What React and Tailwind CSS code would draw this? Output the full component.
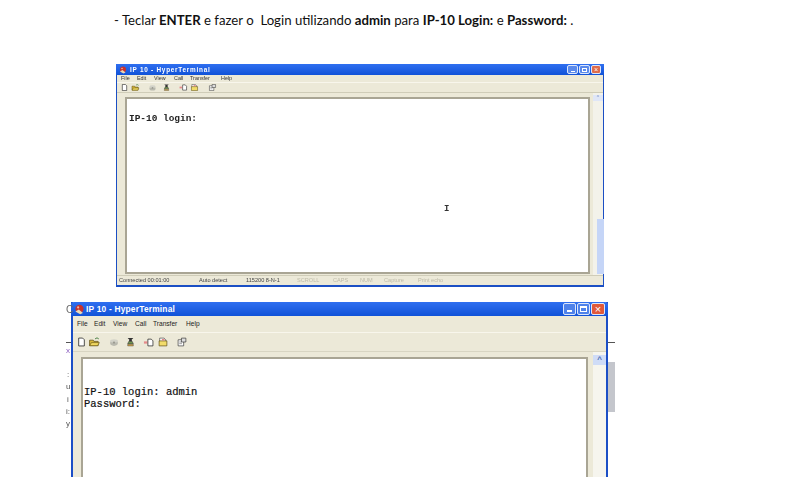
const DocIcon = ({ className }) => (
  <svg viewBox="0 0 16 16" className={className}>
    <path d="M3 1h7l3 3v11H3z" fill="#fff" stroke="#222" strokeWidth="1.4" />
  </svg>
);
const OpenIcon = ({ className }) => (
  <svg viewBox="0 0 18 16" className={className}>
    <path d="M1 5h6l1 2h7v7H1z" fill="#d9b93a" stroke="#5a4a10" strokeWidth="1.2" />
    <path d="M1 14l3-5h13l-3 5z" fill="#f0d860" stroke="#5a4a10" strokeWidth="1" />
    <path d="M10 3c2-2 4-2 6 0" fill="none" stroke="#2a6a2a" strokeWidth="1.4" />
  </svg>
);
const GreyPhone = ({ className }) => (
  <svg viewBox="0 0 18 16" className={className}>
    <ellipse cx="9" cy="10" rx="7" ry="5" fill="#b9b9ae" />
    <ellipse cx="9" cy="6" rx="7" ry="3" fill="#d2d2c8" />
    <circle cx="9" cy="9" r="2" fill="#9a9a90" />
  </svg>
);
const PhoneIcon = ({ className }) => (
  <svg viewBox="0 0 16 16" className={className}>
    <path d="M3 1h10l-3 3 1 3H5l1-3z" fill="#333" />
    <path d="M5 7h6l2 4H3z" fill="#6f9a4a" stroke="#333" />
    <path d="M3 12h10v3H3z" fill="#d0a040" stroke="#333" strokeWidth="0.7" />
  </svg>
);
const SendIcon = ({ className }) => (
  <svg viewBox="0 0 20 16" className={className}>
    <rect x="1" y="6" width="6" height="4" fill="#e58a8a" />
    <path d="M8 2h6l3 3v9H8z" fill="#fff" stroke="#222" strokeWidth="1.3" />
  </svg>
);
const RecvIcon = ({ className }) => (
  <svg viewBox="0 0 18 16" className={className}>
    <path d="M3 1h8l3 3v4H3z" fill="#fff" stroke="#222" />
    <path d="M2 6h14v9H2z" fill="#f2dc6a" stroke="#5a4a10" strokeWidth="1.2" />
    <path d="M7 3h5v2H7z" fill="#d66" />
  </svg>
);
const PropsIcon = ({ className }) => (
  <svg viewBox="0 0 18 16" className={className}>
    <path d="M2 4h10v11H2z" fill="#fff" stroke="#333" strokeWidth="1.2" />
    <path d="M8 1h8v7H8z" fill="#ddd" stroke="#333" strokeWidth="1.2" />
    <path d="M4 8h5M4 11h5" stroke="#555" />
  </svg>
);
const HyperLogo = ({ className }) => (
  <svg viewBox="0 0 16 16" className={className}>
    <circle cx="8" cy="7" r="6" fill="#c8322c" />
    <path d="M2 11l5-3 6 5-4 2z" fill="#e9d9b5" />
    <circle cx="6" cy="5" r="1.6" fill="#f1b4a0" />
  </svg>
);

const WinButton = ({ className, children }) => (
  <div className={`flex items-center justify-center rounded-[2px] border border-[#dbe6fb] ${className}`}>{children}</div>
);

export default function App() {
  return (
    <div className="w-[786px] h-[494px] overflow-hidden bg-white flex flex-col font-['Liberation_Sans',sans-serif]">
      <p className="ml-[114px] mt-[12px] h-[17px] leading-[17px] text-[13.2px] text-[#111] whitespace-pre font-['Lato',sans-serif]">
        - Teclar <b>ENTER</b> e fazer o  Login utilizando <b>admin</b> para <b>IP-10 Login:</b> e <b>Password:</b> .
      </p>

      {/* first window */}
      <div className="relative ml-[116px] mt-[35px] w-[488px] h-[223px] flex flex-col bg-[#ece9d8] border-x border-b-2 border-[#1b4fc4] blur-[0.5px]">
        <div className="h-[11px] shrink-0 flex items-center bg-gradient-to-b from-[#2f6ff0] to-[#0f52d8] -mx-px px-[3px]">
          <HyperLogo className="w-[8px] h-[8px] mr-[3px]" />
          <span className="text-[6.4px] font-bold tracking-[0.75px] text-white">IP 10 - HyperTerminal</span>
          <div className="ml-auto flex gap-[1px]">
            <WinButton className="w-[11px] h-[9px] bg-[#5b8aeb] items-end"><div className="w-[4px] h-px bg-white mb-[1px]" /></WinButton>
            <WinButton className="w-[11px] h-[9px] bg-[#5b8aeb]"><div className="w-[5px] h-[4px] border border-white" /></WinButton>
            <WinButton className="w-[10px] h-[9px] bg-[#dd6a4a] text-white text-[7px] leading-none">×</WinButton>
          </div>
        </div>
        <div className="h-[7px] shrink-0 relative flex items-center pl-[4px] text-[5.4px] text-[#333] bg-[#ece9d8]">
          <span className="w-[16px]">File</span>
          <span className="w-[17px]">Edit</span>
          <span className="w-[20px]">View</span>
          <span className="w-[16px]">Call</span>
          <span className="w-[31px]">Transfer</span>
          <span>Help</span>
        </div>
        <div className="h-[11px] shrink-0 flex items-center pl-[4px] border-t border-[#f8f6ec] border-b border-b-[#cfccb8]">
          <DocIcon className="w-[7px] h-[7px]" />
          <OpenIcon className="w-[9px] h-[7px] ml-[3px]" />
          <GreyPhone className="w-[9px] h-[7px] ml-[8px]" />
          <PhoneIcon className="w-[7px] h-[7px] ml-[6px]" />
          <SendIcon className="w-[9px] h-[7px] ml-[9px]" />
          <RecvIcon className="w-[9px] h-[7px] ml-[2px]" />
          <PropsIcon className="w-[9px] h-[7px] ml-[9px]" />
        </div>
        <div className="flex-1 min-h-0 flex">
          <div className="flex-1 ml-[8px] mt-[4px] mb-[1px] bg-white border-2 border-[#a9a594] pl-[1px]">
            <p className="mt-[14px] ml-px text-[9.45px] leading-[12px] font-bold font-['Liberation_Mono',monospace] text-[#222]">IP-10 login:</p>
          </div>
          <div className="w-[10px] ml-[3px] flex flex-col bg-[#f3f2ea]">
            <div className="h-[6px] mt-[2px] bg-[#dfe6f7] text-[#6f87c0] flex justify-center leading-none text-[5px]">^</div>
            <div className="flex-1" />
            <div className="h-[55px] bg-[#c5d5f7] ml-[4px] -mr-px mb-[1px]" />
          </div>
        </div>
        <div className="h-[10px] shrink-0 flex items-center pl-[2px] text-[5.6px] text-[#444] bg-[#ece9d8] border-t border-[#cfccb8]">
          <span className="w-[80px]">Connected 00:01:00</span>
          <span className="w-[47px]">Auto detect</span>
          <span className="w-[51px]">115200 8-N-1</span>
          <span className="w-[36px] text-[#bdbaa8]">SCROLL</span>
          <span className="w-[27px] text-[#bdbaa8]">CAPS</span>
          <span className="w-[24px] text-[#bdbaa8]">NUM</span>
          <span className="w-[34px] text-[#bdbaa8]">Capture</span>
          <span className="text-[#bdbaa8]">Print echo</span>
        </div>
        <span className="absolute left-[327px] top-[141px] font-['Liberation_Mono',monospace] text-[9px] font-bold leading-none text-[#333]">I</span>
      </div>

      {/* second window over the document behind it */}
      <div className="relative ml-[71px] mt-[15px] w-[537px] h-[175px] flex flex-col bg-[#ece9d8] border-x-2 border-[#1c4fc6] blur-[0.4px]">
        <span className="absolute -left-[7px] top-[3px] text-[10px] leading-none text-[#666]">C</span>
        <div className="absolute -left-[7px] top-[40px] w-[5px] h-px bg-[#555]" />
        <span className="absolute -left-[7px] top-[45px] text-[8px] leading-none text-[#8a5cc0]">x</span>
        <span className="absolute -left-[6px] top-[69px] text-[8px] leading-none text-[#555]">:</span>
        <span className="absolute -left-[7px] top-[81px] text-[8px] leading-none text-[#555]">u</span>
        <span className="absolute -left-[6px] top-[94px] text-[8px] leading-none text-[#555]">i</span>
        <span className="absolute -left-[7px] top-[106px] text-[8px] leading-none text-[#555]">i:</span>
        <span className="absolute -left-[7px] top-[118px] text-[8px] leading-none text-[#555]">y</span>
        <div className="absolute -right-[9px] top-[40px] w-[7px] h-px bg-[#555]" />
        <div className="absolute -right-[9px] top-[60px] w-[7px] h-[50px] bg-[#c4c6cc]" />

        <div className="h-[14px] shrink-0 flex items-center bg-gradient-to-b from-[#2f6ff0] to-[#0f52d8] -mx-[2px] px-[3px] rounded-t-[3px]">
          <HyperLogo className="w-[11px] h-[11px] mr-[1px]" />
          <span className="text-[8.4px] font-bold tracking-[0.2px] text-white">IP 10 - HyperTerminal</span>
          <div className="ml-auto flex gap-[1px]">
            <WinButton className="w-[13px] h-[12px] bg-[#4f82ea] items-end"><div className="w-[5px] h-[2px] bg-white mb-[2px]" /></WinButton>
            <WinButton className="w-[13px] h-[12px] bg-[#4f82ea]"><div className="w-[7px] h-[6px] border border-white border-t-2" /></WinButton>
            <WinButton className="w-[14px] h-[12px] bg-[#e0593a] text-white text-[11px] leading-none">×</WinButton>
          </div>
        </div>
        <div className="h-[16px] shrink-0 flex items-center pl-[4px] text-[6.6px] text-[#222]">
          <span className="w-[17px]">File</span>
          <span className="w-[19px]">Edit</span>
          <span className="w-[22px]">View</span>
          <span className="w-[18px]">Call</span>
          <span className="w-[33px]">Transfer</span>
          <span>Help</span>
        </div>
        <div className="h-[20px] shrink-0 flex items-center pl-[4px] border-t border-[#f8f6ec] border-b border-b-[#d8d5c2]">
          <DocIcon className="w-[9px] h-[10px]" />
          <OpenIcon className="w-[11px] h-[10px] ml-[3px]" />
          <GreyPhone className="w-[10px] h-[10px] ml-[9px]" />
          <PhoneIcon className="w-[9px] h-[10px] ml-[7px]" />
          <SendIcon className="w-[12px] h-[9px] ml-[8px]" />
          <RecvIcon className="w-[10px] h-[10px] ml-[3px]" />
          <PropsIcon className="w-[10px] h-[10px] ml-[9px]" />
        </div>
        <div className="flex-1 min-h-0 flex">
          <div className="flex-1 ml-[8px] mt-[5px] bg-white border-2 border-b-0 border-[#a9a594]">
            <p className="mt-[27px] ml-px text-[10.5px] leading-[12px] font-['Liberation_Mono',monospace] text-[#111] [-webkit-text-stroke:0.2px_#111]">IP-10 login: admin</p>
            <p className="ml-px text-[10.5px] leading-[12px] font-['Liberation_Mono',monospace] text-[#111] [-webkit-text-stroke:0.2px_#111]">Password:</p>
          </div>
          <div className="w-[13px] ml-[5px] bg-[#f6f5ee]">
            <div className="mt-[3px] h-[10px] bg-[#cfdcf7] flex justify-center items-center text-[8px] font-bold leading-none text-[#4a6ab0]">^</div>
          </div>
        </div>
      </div>
    </div>
  );
}
